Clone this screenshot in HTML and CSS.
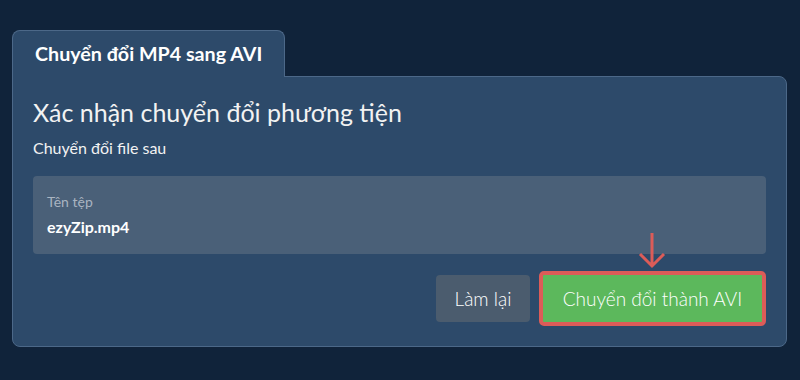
FILE: index.html
```html
<!DOCTYPE html>
<html lang="vi">
<head>
<meta charset="utf-8">
<link rel="stylesheet" href="styles.css">
</head>
<body>
<div class="wrap">
  <div class="tab">Chuyển đổi MP4 sang AVI</div>
  <div class="panel">
    <h1 class="title">Xác nhận chuyển đổi phương tiện</h1>
    <p class="sub">Chuyển đổi file sau</p>
    <div class="file">
      <div class="label">Tên tệp</div>
      <div class="name">ezyZip.mp4</div>
    </div>
    <div class="actions">
      <button class="btn reset">Làm lại</button>
      <div class="go-wrap">
        <svg class="arrow" width="30" height="36" viewBox="0 0 30 36">
          <path d="M15 0 V33 M3 21 L15 33 L27 21" fill="none" stroke="#dc5c58" stroke-width="3"/>
        </svg>
        <button class="btn go">Chuyển đổi thành AVI</button>
      </div>
    </div>
  </div>
</div>
</body>
</html>
```

FILE: styles.css
```css
html, body {
  margin: 0;
  background: #10233a;
  font-family: Lato, "Noto Sans", sans-serif;
  color: #fff;
}
.wrap {
  padding: 30px 13px 0 12px;
}
.tab {
  display: inline-block;
  position: relative;
  z-index: 1;
  background: #2d4a6a;
  border: 1px solid #4c6888;
  border-bottom: none;
  border-radius: 8px 8px 0 0;
  padding: 12px 22px 12px 22px;
  margin-bottom: -1px;
  font-size: 19.7px;
  font-weight: 700;
  line-height: 22px;
}
.panel {
  background: #2d4a6a;
  border: 1px solid #4c6888;
  border-radius: 0 8px 8px 8px;
  padding: 20px 20px 20px 20px;
}
.title {
  margin: 0;
  font-size: 25px;
  font-weight: 400;
  line-height: 31px;
  color: #f2f2f2;
}
.sub {
  margin: 10px 0 0 0;
  font-size: 16px;
  line-height: 19px;
  color: #f2f2f2;
}
.file {
  margin-top: 19px;
  background: #4a6078;
  border-radius: 4px;
  padding: 17px 14px 18px 14px;
}
.label {
  font-size: 14px;
  line-height: 17px;
  color: #a9b4c1;
}
.name {
  margin-top: 7px;
  font-size: 16px;
  font-weight: 700;
  line-height: 19px;
}
.actions {
  display: flex;
  justify-content: flex-end;
  align-items: center;
  gap: 9px;
  margin-top: 17px;
}
.btn {
  font-family: Lato, "Noto Sans", sans-serif;
  font-size: 19px;
  font-weight: 300;
  color: #fff;
  border: none;
  border-radius: 4px;
  cursor: pointer;
}
.reset {
  background: #4b5c6e;
  height: 47px;
  width: 94px;
  padding: 0;
}
.go-wrap {
  position: relative;
}
.go {
  display: block;
  background: #5cb85c;
  border: 4px solid #dc5c58;
  border-radius: 5px;
  height: 55px;
  width: 227px;
  padding: 0;
}
.arrow {
  position: absolute;
  left: 98px;
  top: -38px;
}
```
